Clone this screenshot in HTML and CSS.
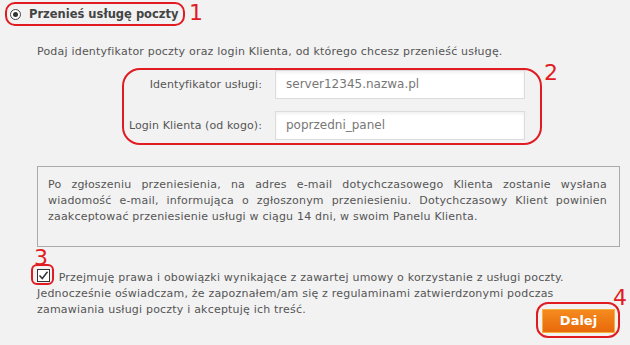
FILE: index.html
```html
<!DOCTYPE html>
<html lang="pl">
<head>
<meta charset="utf-8">
<link rel="stylesheet" href="styles.css">
</head>
<body>
<div class="page">
  <div class="head">
    <span class="radio"><span class="dot"></span></span>
    <span class="title">Przenieś usługę poczty</span>
  </div>
  <p class="intro">Podaj identyfikator poczty oraz login Klienta, od którego chcesz przenieść usługę.</p>
  <div class="form">
    <div class="row">
      <label class="lbl">Identyfikator usługi:</label>
      <div class="input">server12345.nazwa.pl</div>
    </div>
    <div class="row">
      <label class="lbl">Login Klienta (od kogo):</label>
      <div class="input">poprzedni_panel</div>
    </div>
  </div>
  <div class="note">Po zgłoszeniu przeniesienia, na adres e-mail dotychczasowego Klienta zostanie wysłana wiadomość e-mail, informująca o zgłoszonym przeniesieniu. Dotychczasowy Klient powinien zaakceptować przeniesienie usługi w ciągu 14 dni, w swoim Panelu Klienta.</div>
  <div class="terms"><span class="check"><svg width="11" height="11" viewBox="0 0 11 11"><path d="M1.5 5.5 L4.3 8.5 L9.5 1.8" fill="none" stroke="#333" stroke-width="1.5"/></svg></span> Przejmuję prawa i obowiązki wynikające z zawartej umowy o korzystanie z usługi poczty. Jednocześnie oświadczam, że zapoznałem/am się z regulaminami zatwierdzonymi podczas zamawiania usługi poczty i akceptuję ich treść.</div>
  <div class="actions"><span class="btn">Dalej</span></div>

  <div class="mark m1"></div><span class="num n1">1</span>
  <div class="mark m2"></div><span class="num n2">2</span>
  <div class="mark m3"></div><span class="num n3">3</span>
  <div class="mark m4"></div><span class="num n4">4</span>
</div>
</body>
</html>
```
FILE: styles.css
```css
html, body {
  margin: 0;
  padding: 0;
  background: #f2f2f2;
}
.page {
  position: relative;
  width: 630px;
  height: 345px;
  font-family: "DejaVu Sans", Verdana, sans-serif;
  font-size: 11px;
  letter-spacing: 0.2px;
  color: #555;
  overflow: hidden;
}
.head {
  display: flex;
  align-items: center;
  padding: 6px 0 0 10px;
  height: 16px;
}
.radio {
  width: 9px;
  height: 9px;
  border: 1.5px solid #444;
  border-radius: 50%;
  background: #fff;
  display: flex;
  align-items: center;
  justify-content: center;
  margin-right: 8px;
}
.dot {
  width: 5px;
  height: 5px;
  border-radius: 50%;
  background: #333;
}
.title {
  font-weight: bold;
  font-size: 11.5px;
  letter-spacing: 0;
  color: #444;
}
.intro {
  margin: 23px 0 0 37px;
  line-height: 14px;
}
.form {
  margin-top: 11px;
  display: flex;
  flex-direction: column;
  gap: 12px;
}
.row {
  display: grid;
  grid-template-columns: 262px 250px;
  column-gap: 13px;
  align-items: center;
}
.lbl {
  text-align: right;
  color: #555;
  letter-spacing: 0.1px;
}
.input {
  height: 27px;
  line-height: 27px;
  border: 1px solid #dcdcdc;
  background: #fff;
  box-shadow: inset 0 2px 3px rgba(0,0,0,0.06);
  padding-left: 10px;
  font-size: 12px;
  letter-spacing: 0;
  color: #777;
}
.note {
  margin: 26px 10px 0 37px;
  border: 1px solid #aaa;
  padding: 10px 12px 21px 10px;
  line-height: 16px;
  text-align: justify;
}
.terms {
  margin: 22px 40px 0 37px;
  line-height: 16px;
}
.check {
  display: inline-block;
  width: 11px;
  height: 11px;
  border: 1px solid #333;
  background: #fff;
  vertical-align: -1px;
  line-height: 0;
  margin-right: 5px;
}
.check svg { display: block; }
.actions {
  display: flex;
  justify-content: flex-end;
  padding-right: 15px;
  margin-top: -9px;
}
.btn {
  width: 71px;
  height: 22px;
  line-height: 22px;
  text-align: center;
  border: 1px solid #f3b03a;
  background: linear-gradient(#f58a1f, #e8690a);
  color: #fff;
  font-weight: bold;
  font-size: 13px;
  letter-spacing: 0;
}
.mark {
  position: absolute;
  border: 2px solid #e01b22;
  border-radius: 10px;
}
.m1 { left: 5px; top: 2px; width: 176px; height: 20px; }
.m2 { left: 122px; top: 68px; width: 416px; height: 73px; border-radius: 18px; }
.m3 { left: 31px; top: 264px; width: 19px; height: 17px; border-radius: 6px; }
.m4 { left: 536px; top: 302px; width: 80px; height: 32px; border-radius: 12px; }
.num {
  position: absolute;
  color: #e01b22;
  font-family: "DejaVu Sans", Verdana, sans-serif;
  font-size: 22px;
  line-height: 22px;
  letter-spacing: 0;
}
.n1 { left: 189px; top: 2px; }
.n2 { left: 544px; top: 62px; }
.n3 { left: 34px; top: 247px; }
.n4 { left: 613px; top: 287px; }
```
